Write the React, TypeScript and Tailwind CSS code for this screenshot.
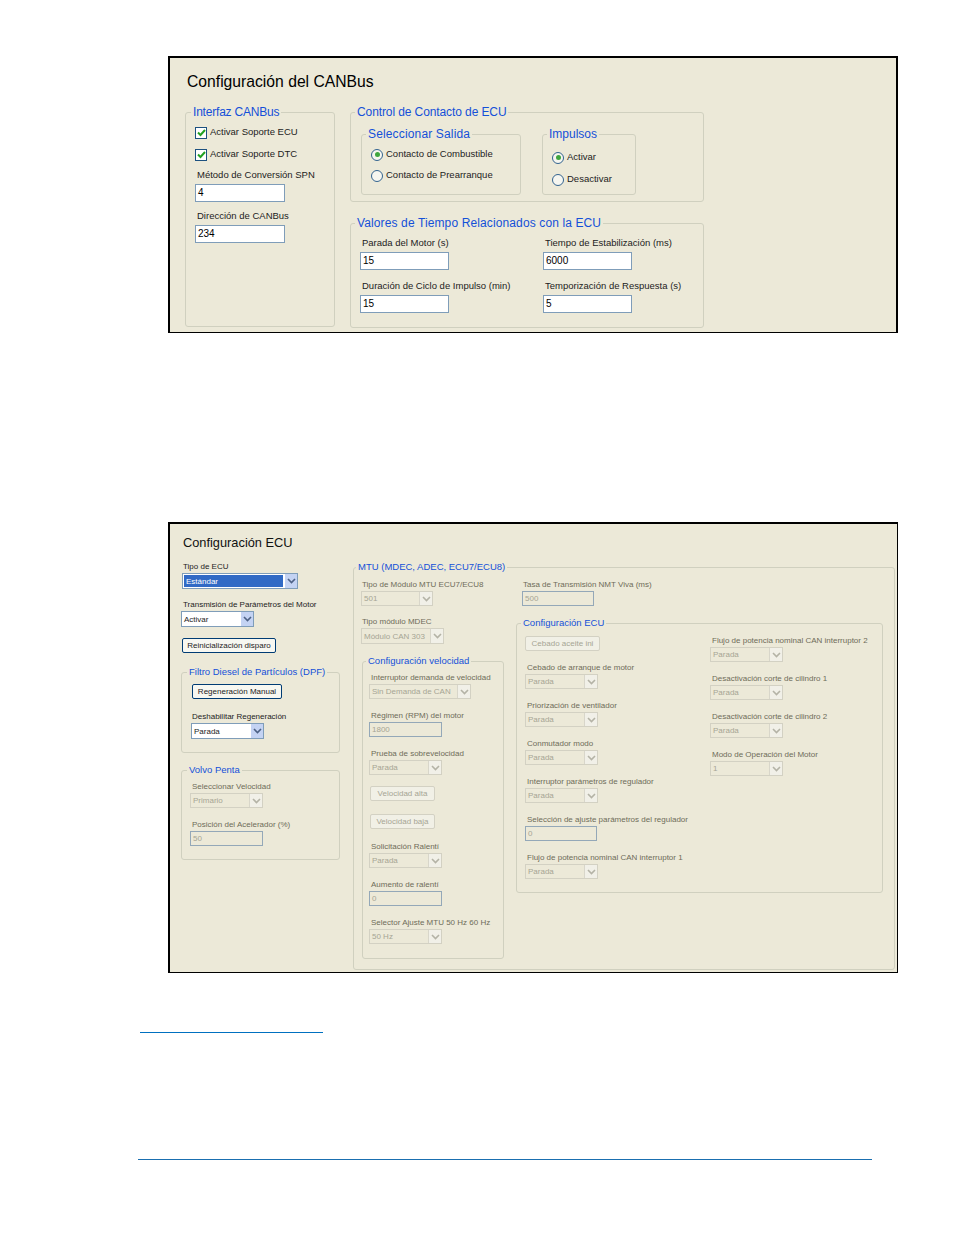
import type { ReactNode } from "react";

const FONT = "font-['Liberation_Sans',Arial,sans-serif]";

function Chevron({ off }: { off?: boolean }) {
  return (
    <svg width="9" height="6" viewBox="0 0 9 6" fill="none">
      <path d="M1 1 L4.5 4.5 L8 1" stroke={off ? "#b4b3a6" : "#4d6185"} strokeWidth="1.6" />
    </svg>
  );
}

function Group({ title, className, pad, small, lx = "ml-[5px]", children }: { title: string; className: string; pad: string; small?: boolean; lx?: string; children: ReactNode }) {
  return (
    <fieldset className={`min-w-0 rounded-[3px] border border-[#d0d0bf] ${className}`}>
      <legend className={`h-[15px] px-[2px] whitespace-nowrap text-[#1450d8] ${small ? "text-[9.5px] leading-[13px]" : "text-[12px] leading-[15px]"} ${lx}`}>{title}</legend>
      <div className={pad}>{children}</div>
    </fieldset>
  );
}

function Label({ text, off, big, className = "" }: { text: string; off?: boolean; big?: boolean; className?: string }) {
  return (
    <div className={`h-[13px] leading-[13px] whitespace-nowrap ${big ? "text-[9.5px]" : "text-[8px]"} ${off ? "text-[#6e6c58]" : "text-[#1c1c1c]"} ${className}`}>{text}</div>
  );
}

function TextBox({ value, className, off }: { value: string; className: string; off?: boolean }) {
  return (
    <div className={`flex items-center border pl-[2px] ${off ? "h-[15px] border-[#94a8b8] bg-[#ece9d8] text-[8px] text-[#a6a594]" : "border-[#7f9db9] bg-white text-[10px] leading-[14px] text-black"} ${className}`}>
      {value}
    </div>
  );
}

function Select({ value, className, off, selected }: { value: string; className: string; off?: boolean; selected?: boolean }) {
  return (
    <div className={`flex h-[15px] items-stretch border text-[8px] leading-[13px] ${off ? "border-[#d3d1c3] bg-[#ece9d8] text-[#a6a594]" : "border-[#7f9db9] bg-white text-[#1c1c1c]"} ${className}`}>
      <div className={`flex min-w-0 flex-1 items-center whitespace-nowrap ${selected ? "m-[1px] bg-[#316ac5] pl-[2px] text-white" : "pl-[2px]"}`}>{value}</div>
      <div className={`flex w-[13px] items-center justify-center border-l ${off ? "border-[#d8d6ca] bg-[#f1f0e8]" : "border-white bg-[#c4d3f3]"}`}>
        <Chevron off={off} />
      </div>
    </div>
  );
}

function WinButton({ text, className, off }: { text: string; className: string; off?: boolean }) {
  return (
    <div className={`flex h-[15px] items-center justify-center whitespace-nowrap rounded-[2px] border text-[8px] ${off ? "border-[#d3d1c3] bg-[#f1f0e6] text-[#a6a594]" : "border-[#003c74] bg-[#f7f7f1] text-[#1c1c1c]"} ${className}`}>
      {text}
    </div>
  );
}

function Check({ text, className = "" }: { text: string; className?: string }) {
  return (
    <div className={`flex h-[13px] items-center gap-[3px] ${className}`}>
      <div className="flex h-[12px] w-[12px] items-center justify-center border border-[#1c5180] bg-white">
        <svg width="9" height="8" viewBox="0 0 9 8" fill="none">
          <path d="M1 3.5 L3.5 6 L8 1" stroke="#21a121" strokeWidth="2" />
        </svg>
      </div>
      <span className="text-[9.5px] text-[#1c1c1c]">{text}</span>
    </div>
  );
}

function Radio({ text, on, className = "" }: { text: string; on?: boolean; className?: string }) {
  return (
    <div className={`flex h-[13px] items-center gap-[3px] ${className}`}>
      <div className="flex h-[12px] w-[12px] items-center justify-center rounded-full border border-[#33638f] bg-[#f6f6f0]">
        {on && <div className="h-[5px] w-[5px] rounded-full bg-[#3fa63f]" />}
      </div>
      <span className="text-[9.5px] text-[#1c1c1c]">{text}</span>
    </div>
  );
}

function CanBusPanel() {
  return (
    <div className="h-[277px] border-t-2 border-r-2 border-b border-l-2 border-black bg-[#ece9d8] pl-[15px]">
      <h2 className="mt-[14px] ml-[2px] h-[20px] text-[15.7px] leading-[20px] text-black">Configuración del CANBus</h2>
      <div className="mt-[13px] flex gap-[15px]">
        <Group title="Interfaz CANBus" lx="ml-[5px] tracking-[-0.2px]" className="h-[222px] w-[150px]" pad="pl-[9px]">
          <Check text="Activar Soporte ECU" className="mt-[6px]" />
          <Check text="Activar Soporte DTC" className="mt-[9px]" />
          <Label big text="Método de Conversión SPN" className="mt-[7px] ml-[2px]" />
          <TextBox value="4" className="mt-[3px] h-[18px] w-[90px]" />
          <Label big text="Dirección de CANBus" className="mt-[7px] ml-[2px]" />
          <TextBox value="234" className="mt-[3px] h-[18px] w-[90px]" />
        </Group>
        <div className="flex w-[354px] flex-col gap-[14px]">
          <Group title="Control de Contacto de ECU" lx="ml-[4px] tracking-[-0.1px]" className="h-[97px]" pad="pl-[10px]">
            <div className="mt-[7px] flex gap-[21px]">
              <Group title="Seleccionar Salida" lx="ml-[4px] tracking-[0.15px]" className="h-[68px] w-[160px]" pad="pl-[9px]">
                <Radio text="Contacto de Combustible" on className="mt-[6px]" />
                <Radio text="Contacto de Prearranque" className="mt-[8px]" />
              </Group>
              <Group title="Impulsos" lx="ml-[4px]" className="h-[68px] w-[94px]" pad="pl-[9px]">
                <Radio text="Activar" on className="mt-[9px]" />
                <Radio text="Desactivar" className="mt-[9px]" />
              </Group>
            </div>
          </Group>
          <Group title="Valores de Tiempo Relacionados con la ECU" lx="ml-[4px] tracking-[0.12px]" className="h-[112px]" pad="pl-[9px]">
            <div className="mt-[5px] grid grid-cols-[183px_1fr] gap-y-[9px]">
              {[
                ["Parada del Motor (s)", "15"],
                ["Tiempo de Estabilización (ms)", "6000"],
                ["Duración de Ciclo de Impulso (min)", "15"],
                ["Temporización de Respuesta (s)", "5"],
              ].map(([label, value]) => (
                <div key={label}>
                  <Label big text={label} className="ml-[2px]" />
                  <TextBox value={value} className="mt-[3px] h-[18px] w-[89px]" />
                </div>
              ))}
            </div>
          </Group>
        </div>
      </div>
    </div>
  );
}

function OffSelectField({ label, value = "Parada", className = "" }: { label: string; value?: string; className?: string }) {
  return (
    <div className={className}>
      <Label text={label} off className="ml-[2px]" />
      <Select value={value} off className="w-[73px]" />
    </div>
  );
}

function EcuPanel() {
  return (
    <div className="h-[451px] border-t-2 border-r border-b border-l-2 border-black bg-[#ece9d8]">
      <h2 className="mt-[11px] ml-[13px] h-[16px] text-[12.8px] leading-[16px] text-[#111]">Configuración ECU</h2>
      <div className="mt-[9px] ml-[11px] flex gap-[13px]">
        <div className="w-[159px]">
          <Label text="Tipo de ECU" className="ml-[2px]" />
          <Select value="Estándar" selected className="ml-[1px] h-[16px] w-[116px]" />
          <Label text="Transmisión de Parámetros del Motor" className="mt-[9px] ml-[2px]" />
          <Select value="Activar" className="h-[16px] w-[73px]" />
          <WinButton text="Reinicialización disparo" className="mt-[11px] ml-[1px] w-[94px]" />
          <Group small title="Filtro Diesel de Partículos (DPF)" className="mt-[12px] h-[88px]" pad="pl-[9px]">
            <WinButton text="Regeneración Manual" className="mt-[4px] ml-[1px] w-[90px]" />
            <Label text="Deshabilitar Regeneración" className="mt-[11px] ml-[1px]" />
            <Select value="Parada" className="h-[16px] w-[73px]" />
          </Group>
          <Group small title="Volvo Penta" className="mt-[10px] h-[97px]" pad="pl-[8px]">
            <Label text="Seleccionar Velocidad" off className="mt-[2px] ml-[2px]" />
            <Select value="Primario" off className="w-[73px]" />
            <Label text="Posición del Acelerador (%)" off className="mt-[10px] ml-[2px]" />
            <TextBox value="50" off className="w-[73px]" />
          </Group>
        </div>

        <Group small title="MTU (MDEC, ADEC, ECU7/ECU8)" lx="ml-[2px]" className="h-[410px] w-[542px]" pad="pl-[7px]">
          <div className="flex gap-[12px]">
            <div className="w-[143px] pt-[3px]">
              <Label text="Tipo de Módulo MTU ECU7/ECU8" off className="ml-[1px]" />
              <Select value="501" off className="w-[72px]" />
              <Label text="Tipo módulo MDEC" off className="mt-[9px] ml-[1px]" />
              <Select value="Módulo CAN 303" off className="h-[16px] w-[83px]" />
              <Group small title="Configuración velocidad" lx="ml-[3px]" className="mt-[10px] ml-[1px] h-[305px] w-[142px]" pad="pl-[6px]">
                <div className="flex flex-col gap-[10px] pt-[2px]">
                  <div>
                    <Label text="Interruptor demanda de velocidad" off className="ml-[2px]" />
                    <Select value="Sin Demanda de CAN" off className="w-[102px]" />
                  </div>
                  <div>
                    <Label text="Régimen (RPM) del motor" off className="ml-[2px]" />
                    <TextBox value="1800" off className="w-[73px]" />
                  </div>
                  <OffSelectField label="Prueba de sobrevelocidad" />
                  <WinButton text="Velocidad alta" off className="mt-[1px] ml-[1px] w-[65px]" />
                  <WinButton text="Velocidad baja" off className="mt-[3px] ml-[1px] w-[65px]" />
                  <OffSelectField label="Solicitación Ralentí" className="mt-[1px]" />
                  <div>
                    <Label text="Aumento de ralentí" off className="ml-[2px]" />
                    <TextBox value="0" off className="w-[73px]" />
                  </div>
                  <OffSelectField label="Selector Ajuste MTU 50 Hz 60 Hz" value="50 Hz" />
                </div>
              </Group>
            </div>

            <div className="w-[367px] pt-[3px]">
              <Label text="Tasa de Transmisión NMT Viva (ms)" off className="ml-[7px]" />
              <TextBox value="500" off className="ml-[6px] w-[72px]" />
              <Group small title="Configuración ECU" lx="ml-[4px]" className="mt-[10px] h-[277px]" pad="pl-[8px]">
                <div className="flex">
                  <div className="flex w-[185px] flex-col gap-[10px] pt-[5px]">
                    <WinButton text="Cebado aceite ini" off className="w-[75px]" />
                    <OffSelectField label="Cebado de arranque de motor" />
                    <OffSelectField label="Priorización de ventilador" />
                    <OffSelectField label="Conmutador modo" />
                    <OffSelectField label="Interruptor parámetros de regulador" />
                    <div>
                      <Label text="Selección de ajuste parámetros del regulador" off className="ml-[2px]" />
                      <TextBox value="0" off className="w-[72px]" />
                    </div>
                    <OffSelectField label="Flujo de potencia nominal CAN interruptor 1" />
                  </div>
                  <div className="flex flex-col gap-[10px] pt-[3px]">
                    <OffSelectField label="Flujo de potencia nominal CAN interruptor 2" />
                    <OffSelectField label="Desactivación corte de cilindro 1" />
                    <OffSelectField label="Desactivación corte de cilindro 2" />
                    <OffSelectField label="Modo de Operación del Motor" value="1" />
                  </div>
                </div>
              </Group>
            </div>
          </div>
        </Group>
      </div>
    </div>
  );
}

export default function App() {
  return (
    <div className={`h-[1235px] w-[954px] bg-white pt-[56px] ${FONT}`}>
      <div className="ml-[168px] w-[730px]">
        <CanBusPanel />
        <div className="mt-[189px]">
          <EcuPanel />
        </div>
      </div>
      <div className="mt-[59px] ml-[140px] h-px w-[183px] bg-[#0070c0]" />
      <div className="mt-[126px] ml-[138px] h-px w-[734px] bg-[#1a6fb0]" />
    </div>
  );
}
